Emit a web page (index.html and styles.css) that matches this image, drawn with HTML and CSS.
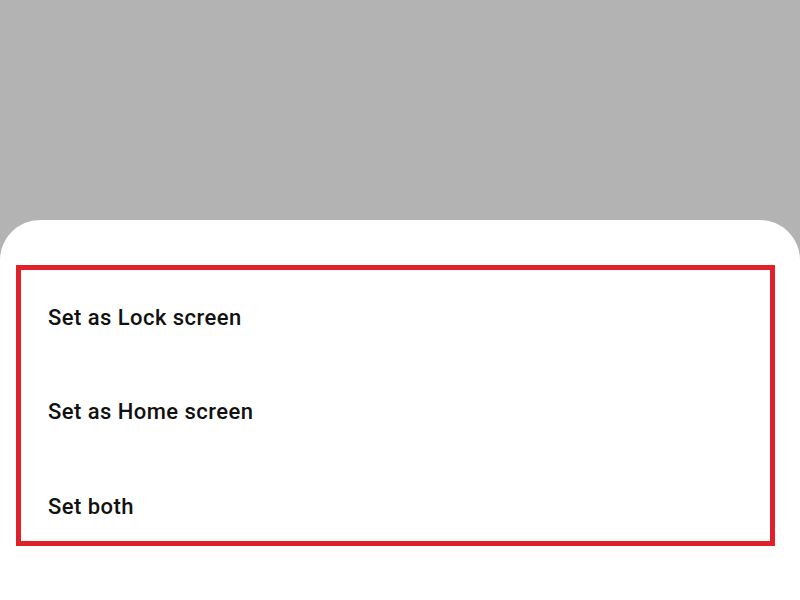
FILE: index.html
```html
<!DOCTYPE html>
<html>
<head>
<meta charset="utf-8">
<link rel="stylesheet" href="styles.css">
</head>
<body>
<div class="screen">
  <div class="scrim"></div>
  <div class="sheet">
    <div class="options">
      <div class="option">Set as Lock screen</div>
      <div class="option">Set as Home screen</div>
      <div class="option">Set both</div>
    </div>
  </div>
</div>
</body>
</html>
```
FILE: styles.css
```css
html, body {
  margin: 0;
  padding: 0;
}
body {
  background: #b3b3b3;
  font-family: Roboto, "Noto Sans", sans-serif;
}
.screen {
  width: 800px;
  height: 600px;
  display: flex;
  flex-direction: column;
  overflow: hidden;
}
.scrim {
  height: 220px;
  flex: none;
  background: #b3b3b3;
}
.sheet {
  flex: 1;
  background: #ffffff;
  border-radius: 40px 40px 0 0;
  padding: 45px 25px 0 16px;
}
.options {
  border: 5px solid #e0202a;
  height: 271px;
  display: flex;
  flex-direction: column;
}
.option {
  height: 94.5px;
  flex: none;
  display: flex;
  align-items: center;
  padding-left: 27px;
  font-size: 22px;
  font-weight: 500;
  color: #111111;
  letter-spacing: 0.45px;
}
```
